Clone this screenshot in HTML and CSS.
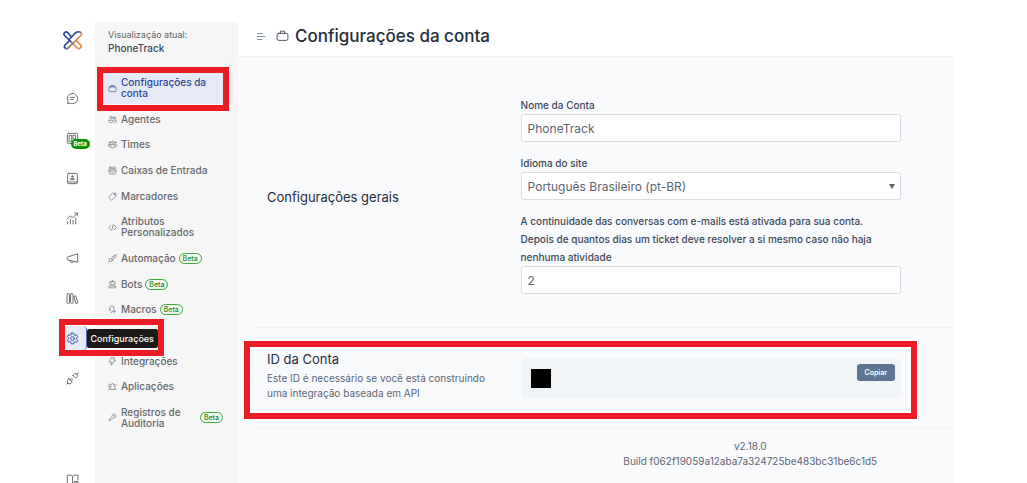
FILE: index.html
```html
<!DOCTYPE html>
<html lang="pt-BR">
<head>
    <meta charset="UTF-8">
    <meta name="viewport" content="width=device-width, initial-scale=1.0">
    <title>PhoneTrack - Configurações da conta</title>
    <link rel="stylesheet" href="styles.css">
</head>
<body>
    <div class="app">
        <nav class="rail" aria-label="Principal">
            <a href="#" class="rail-logo" aria-label="Início">
                <svg width="20" height="20" viewBox="0 0 20 20" fill="none" stroke-width="1.7" stroke-linecap="round" stroke-linejoin="round">
                    <defs>
                        <linearGradient id="logoGradient" gradientUnits="userSpaceOnUse" x1="6" y1="5" x2="16" y2="13">
                            <stop offset="0.35" stop-color="#2f4c9c"/>
                            <stop offset="0.75" stop-color="#e58a4b"/>
                        </linearGradient>
                    </defs>
                    <g stroke="url(#logoGradient)">
                        <path d="M8 6.500 4.700 2.600a2.100 2.100 0 0 0-3.100 2.900l12.600 12.300a2.200 2.200 0 0 0 3.300-3L13.500 10.800"/>
                        <path d="M6.500 9 12.800 2.700l2-.9h1.500a2.200 2.200 0 0 1 1.600 3.700L5.500 17.800a2.200 2.200 0 0 1-3.600-2.600L6.500 10.500"/>
                    </g>
                </svg>
            </a>
            <a href="#" class="rail-link" aria-label="Conversas">
                <svg class="icon" viewBox="0 0 24 24"><path d="M12 2.500a9.500 9.500 0 1 1-4.500 17.900L2.700 21.500l1.100-4.600A9.500 9.500 0 0 1 12 2.500ZM8.500 10h7M8.500 14h5"/></svg>
            </a>
            <a href="#" class="rail-link" aria-label="Kanban">
                <svg class="icon" viewBox="0 0 24 24"><rect x="2.500" y="2.500" width="19" height="19" rx="2"/><path d="M6.500 6h4v12h-4zM13.500 6h4v7h-4z"/></svg>
                <span class="rail-badge">Beta</span>
            </a>
            <a href="#" class="rail-link" aria-label="Contatos">
                <svg class="icon" viewBox="0 0 24 24"><path d="M5 2.500h14a2 2 0 0 1 2 2v15a2 2 0 0 1-2 2H5a2 2 0 0 1-2-2V4.500a2 2 0 0 1 2-2ZM3 18.500h18M9 14h6v-1.500H9Z"/><circle cx="12" cy="8.500" r="1.500"/></svg>
            </a>
            <a href="#" class="rail-link" aria-label="Relatórios">
                <svg class="icon" viewBox="0 0 24 24"><path d="M3 22v-4M8 22v-9M13 22v-7M18 22V11M2 13l6-6 4 4 9-9M16 2h5v5"/></svg>
            </a>
            <a href="#" class="rail-link" aria-label="Campanhas">
                <svg class="icon" viewBox="0 0 24 24"><path d="M21.500 4v15L3.500 14.500a2 2 0 0 1-1.500-2v-1.500A2 2 0 0 1 3.500 9ZM7 15.500c0 5 6 6 7.500 1.800"/></svg>
            </a>
            <a href="#" class="rail-link" aria-label="Central de ajuda">
                <svg class="icon" viewBox="0 0 24 24"><rect x="2" y="3" width="4.500" height="18" rx="1.500"/><rect x="8.500" y="3" width="4.500" height="18" rx="1.500"/><path d="m15 8 3-1 4 13-3 1Z"/></svg>
            </a>
            <a href="#" class="rail-link active" aria-label="Configurações">
                <svg class="icon" viewBox="0 0 24 24"><path d="M10 2h4l.7 3 2 1.100 3-.9 2 3.500L19.500 11v2l2.200 2.300-2 3.500-3-.9-2 1.100-.7 3h-4l-.7-3-2-1.100-3 .9-2-3.500L4.500 13v-2L2.300 8.700l2-3.500 3 .9 2-1.100Z"/><circle cx="12" cy="12" r="3.500"/></svg>
                <span class="tooltip">Configurações</span>
                <span class="highlight highlight-rail"></span>
            </a>
            <a href="#" class="rail-link" aria-label="Integrações">
                <svg class="icon" viewBox="0 0 24 24"><path d="M13 6.500l4.500 4.500c4-1.500 5-4.500 3-7s-6-1-7.500 2.500ZM20.500 3.500 22.500 1.500M5.500 12.500l6 6c-2 4-6 4.500-8 2s-1.500-6.500 2-8ZM3.500 20.500l-2 2M8 14.500l2.500-2.500M10 16.500l2.500-2.500"/></svg>
            </a>
            <a href="#" class="rail-link rail-docs" aria-label="Documentação">
                <svg class="icon" viewBox="0 0 24 24"><path d="M12 20H2.500V4H10l2 2v14ZM12 6l2-2h8v9M15 21v-5h7v5M18.500 16v4"/></svg>
            </a>
        </nav>

        <aside class="sidebar">
            <div class="account">
                <p class="account-label">Visualização atual:</p>
                <p class="account-name">PhoneTrack</p>
            </div>
            <ul class="menu">
                <li>
                    <a href="#" class="menu-link active">
                        <svg class="icon" viewBox="0 0 24 24"><rect x="2.500" y="7.500" width="19" height="13" rx="3"/><path d="M8 7.500V4h8v3.500"/></svg>
                        <span>Configurações da conta</span>
                    </a>
                    <span class="highlight highlight-menu"></span>
                </li>
                <li><a href="#" class="menu-link">
                    <svg class="icon" viewBox="0 0 24 24"><circle cx="8" cy="7" r="3.500"/><circle cx="17" cy="8" r="3"/><path d="M2 14h11v3c0 5-11 5-11 0ZM16 14h6v3c0 3-3 4-6 3"/></svg>
                    <span>Agentes</span></a></li>
                <li><a href="#" class="menu-link">
                    <svg class="icon" viewBox="0 0 24 24"><circle cx="12" cy="6" r="3"/><circle cx="4.500" cy="7" r="2"/><circle cx="19.500" cy="7" r="2"/><path d="M7.500 12h9v5c0 6-9 6-9 0ZM4.500 12H2v4c0 2 1 3 3 3M19.500 12H22v4c0 2-1 3-3 3"/></svg>
                    <span>Times</span></a></li>
                <li><a href="#" class="menu-link">
                    <svg class="icon" viewBox="0 0 24 24"><rect x="3" y="3" width="18" height="18" rx="3"/><path d="M3 13h5c1 4 7 4 8 0h5M7 7h10M7 10h10"/></svg>
                    <span>Caixas de Entrada</span></a></li>
                <li><a href="#" class="menu-link">
                    <svg class="icon" viewBox="0 0 24 24"><path d="M13 3h8v8L11 21a2 2 0 0 1-3 0l-5-5a2 2 0 0 1 0-3Z"/><circle cx="17" cy="7" r="1"/></svg>
                    <span>Marcadores</span></a></li>
                <li><a href="#" class="menu-link">
                    <svg class="icon" viewBox="0 0 24 24"><path d="m7 6-5 6 5 6M17 6l5 6-5 6M14 4l-4 16"/></svg>
                    <span>Atributos Personalizados</span></a></li>
                <li><a href="#" class="menu-link">
                    <svg class="icon" viewBox="0 0 24 24"><circle cx="7" cy="16" r="4.500"/><path d="m2 22 2-2M14 6l4 4c4-1 4-4 3-6s-6-2-7 2ZM21 3l2-2M11 12l3-3M13 15l3-3"/></svg>
                    <span>Automação</span><span class="badge">Beta</span></a></li>
                <li><a href="#" class="menu-link">
                    <svg class="icon" viewBox="0 0 24 24"><rect x="5" y="4" width="14" height="9" rx="2"/><path d="M12 1v3M9 8v1M15 8v1M4 16h16v5H4Z"/></svg>
                    <span>Bots</span><span class="badge">Beta</span></a></li>
                <li><a href="#" class="menu-link">
                    <svg class="icon" viewBox="0 0 24 24"><path d="M5 13V8a5 5 0 0 1 11 0v3M3 13h4M10 17h8M15 13l5 4-5 4M8 20h2"/></svg>
                    <span>Macros</span><span class="badge">Beta</span></a></li>
                <li><a href="#" class="menu-link">
                    <svg class="icon" viewBox="0 0 24 24"><path d="M4 4h16v13h-9l-5 4v-4H4Z"/></svg>
                    <span>Atalhos</span></a></li>
                <li><a href="#" class="menu-link">
                    <svg class="icon" viewBox="0 0 24 24"><path d="M9 2h8l-2 6h5L8 22l2-8H5Z"/></svg>
                    <span>Integrações</span></a></li>
                <li><a href="#" class="menu-link">
                    <svg class="icon" viewBox="0 0 24 24"><path d="M6 8h3c-1-6 7-6 6 0h4v4c-3 0-3 4 0 4v4H6v-4c3 0 3-4 0-4ZM1 6l3 2M23 6l-2 2M1 13h3M1 20l3-2M23 20l-2-2"/></svg>
                    <span>Aplicações</span></a></li>
                <li><a href="#" class="menu-link">
                    <svg class="icon" viewBox="0 0 24 24"><path d="m3 18 8-8c-1-5 3-8 7-7l-3 3 3 3 3-3c1 5-2 8-7 7l-8 8c-2 1-4-1-3-3Z"/></svg>
                    <span>Registros de Auditoria</span><span class="badge badge-end">Beta</span></a></li>
            </ul>
        </aside>

        <main class="main">
            <header class="header">
                <button type="button" class="menu-toggle" aria-label="Alternar menu">
                    <svg width="10" height="8" viewBox="0 0 10 8"><path d="M1 1.500h6M1 4.500h8M1 7.500h5"/></svg>
                </button>
                <svg class="icon header-icon" viewBox="0 0 24 24"><rect x="2" y="8" width="20" height="13" rx="3"/><path d="M8 8V4h8v4"/></svg>
                <h1 class="title">Configurações da conta</h1>
            </header>

            <div class="content">
                <section class="section section-general">
                    <h2 class="section-title">Configurações gerais</h2>
                    <form class="form">
                        <div class="field">
                            <label for="name">Nome da Conta</label>
                            <input type="text" id="name" class="control" value="PhoneTrack">
                        </div>
                        <div class="field">
                            <label for="locale">Idioma do site</label>
                            <div class="select">
                                <select id="locale" class="control">
                                    <option>Português Brasileiro (pt-BR)</option>
                                </select>
                                <svg class="select-arrow" width="6" height="5" viewBox="0 0 6 5"><path d="M0 0h6L3 5Z"/></svg>
                            </div>
                        </div>
                        <div class="field">
                            <label for="days">A continuidade das conversas com e-mails está ativada para sua conta.<br>Depois de quantos dias um ticket deve resolver a si mesmo caso não haja nenhuma atividade</label>
                            <input type="text" inputmode="numeric" id="days" class="control" value="2">
                        </div>
                    </form>
                </section>

                <section class="section section-id">
                    <div class="section-info">
                        <h2 class="section-title">ID da Conta</h2>
                        <p class="section-text">Este ID é necessário se você está construindo uma integração baseada em API</p>
                    </div>
                    <div class="code">
                        <span class="code-value"></span>
                        <button type="button" class="copy-btn">Copiar</button>
                    </div>
                    <span class="highlight highlight-id"></span>
                </section>

                <footer class="version">
                    <p>v2.18.0</p>
                    <p>Build f062f19059a12aba7a324725be483bc31be6c1d5</p>
                </footer>
            </div>
        </main>
    </div>
</body>
</html>
```
FILE: styles.css
```css
* {
    margin: 0;
    padding: 0;
    box-sizing: border-box;
}

body {
    font-family: Inter, 'Liberation Sans', sans-serif;
    font-size: 10px;
    color: #3c4858;
    background: #fff;
    padding: 22px 74px 0 50px;
}

a {
    color: inherit;
    text-decoration: none;
}

.app {
    display: flex;
    min-height: calc(100vh - 22px);
}

.icon {
    width: 13px;
    height: 13px;
    flex: none;
    fill: none;
    stroke: currentColor;
    stroke-width: 1.7;
    stroke-linecap: round;
    stroke-linejoin: round;
}

/* Marcações em vermelho */
.highlight {
    position: absolute;
    border: 6px solid #ec1c24;
    pointer-events: none;
    z-index: 2;
}

/* Barra principal */
.rail {
    width: 45px;
    flex: none;
    display: flex;
    flex-direction: column;
    align-items: center;
    gap: 16px;
    color: #5f6368;
}

.rail-logo {
    height: 36px;
    margin-bottom: 12px;
    display: flex;
    align-items: center;
}

.rail-link {
    position: relative;
    width: 28px;
    height: 24px;
    flex: none;
    display: flex;
    align-items: center;
    justify-content: center;
}

.rail-link.active {
    color: #2f4fa5;
    background: #e5eaf6;
    border-right: 1px solid #5a77c4;
    border-radius: 4px;
}

.rail-docs {
    margin-top: auto;
    margin-bottom: -8px;
}

.rail-badge {
    position: absolute;
    left: 12px;
    top: 13px;
    padding: 0 3px;
    border-radius: 6px;
    background: #0a930a;
    color: #fff;
    font-size: 6px;
    font-weight: 700;
    line-height: 10px;
}

.tooltip {
    position: absolute;
    left: 28px;
    top: 3px;
    padding: 0 4px;
    border-radius: 2px;
    background: #1b1a18;
    color: #fff;
    font-size: 9px;
    font-weight: 500;
    line-height: 19px;
    z-index: 1;
}

.highlight-rail {
    left: 0;
    top: -7px;
    width: 105px;
    height: 37px;
}

/* Menu lateral */
.sidebar {
    width: 143px;
    flex: none;
    background: #f6f6f6;
    padding: 0 5px 0 3px;
}

.account {
    height: 40px;
    padding: 7px 9px;
    border: 1px solid #f1f1f1;
    border-top: 0;
    border-radius: 4px;
}

.account-label {
    font-size: 9px;
    line-height: 12px;
    color: #5f6368;
}

.account-name {
    font-size: 10px;
    font-weight: 500;
    line-height: 14px;
    color: #3c4858;
}

.menu {
    list-style: none;
    margin-top: 10px;
    min-height: 362px;
    display: flex;
    flex-direction: column;
    justify-content: space-between;
}

.menu li {
    position: relative;
}

.menu-link {
    display: flex;
    align-items: center;
    gap: 4px;
    padding: 5px 10px;
    border-radius: 4px;
    color: #66696d;
    font-weight: 500;
    line-height: 11px;
}

.menu-link .icon {
    width: 9px;
    height: 9px;
}

.menu-link.active {
    color: #2f4695;
    background: #e5eaf6;
}

.highlight-menu {
    left: -1px;
    top: -5px;
    width: 132px;
    height: 44px;
}

.badge {
    flex: none;
    margin-left: -1px;
    padding: 0 3px;
    border: 1px solid #3aa83a;
    border-radius: 6px;
    color: #159015;
    font-size: 7px;
    line-height: 9px;
}

.badge-end {
    margin-left: auto;
}

/* Conteúdo */
.main {
    flex: 1;
    min-width: 0;
    display: flex;
    flex-direction: column;
    background: #f9fafc;
}

.header {
    height: 35px;
    display: flex;
    align-items: center;
    padding: 0 18px 7px;
    background: #fff;
    border-bottom: 1px solid #f0f2f4;
}

.menu-toggle {
    display: flex;
    border: 0;
    background: none;
    cursor: pointer;
}

.menu-toggle svg {
    fill: none;
    stroke: #8294a8;
}

.header-icon {
    margin: 0 6px 0 10px;
}

.title {
    font-size: 17px;
    font-weight: 500;
    color: #1f2d3d;
}

.content {
    padding-left: 16px;
}

.section {
    position: relative;
    display: grid;
    grid-template-columns: 4fr 6fr;
    padding: 0 52px 0 13px;
    border-bottom: 1px solid #eff2f5;
}

.section-general {
    align-items: center;
    padding-top: 39px;
    padding-bottom: 29px;
}

.section-id {
    padding-top: 23px;
    padding-bottom: 27px;
}

.section-title {
    font-size: 13px;
    font-weight: 400;
    line-height: 16px;
    color: #1f2d3d;
}

.section-info {
    padding-right: 32px;
}

.section-text {
    margin-top: 4px;
    line-height: 15px;
    color: #5c6675;
}

.form {
    display: flex;
    flex-direction: column;
    gap: 12px;
    padding-bottom: 4px;
}

.field label {
    display: block;
    font-weight: 500;
    line-height: 18px;
}

.control {
    display: block;
    width: 100%;
    height: 28px;
    padding: 0 6px;
    border: 1px solid #d8dee6;
    border-radius: 3px;
    background: #fff;
    color: #5c6370;
    font-family: inherit;
    font-size: 12px;
    appearance: none;
}

.select {
    position: relative;
}

.select-arrow {
    position: absolute;
    right: 6px;
    top: 12px;
    fill: #5f6368;
    pointer-events: none;
}

.code {
    display: flex;
    align-items: flex-start;
    justify-content: space-between;
    height: 41px;
    margin-top: 7px;
    padding: 6px 6px 0 10px;
    border-radius: 6px;
    background: #f1f4f7;
}

.code-value {
    width: 20px;
    height: 19px;
    margin-top: 5px;
    background: #000;
}

.copy-btn {
    height: 17px;
    padding: 0 8px;
    border: 0;
    border-radius: 3px;
    background: #5d7592;
    color: #fff;
    font-family: inherit;
    font-size: 7px;
    font-weight: 600;
    cursor: pointer;
}

.highlight-id {
    left: -10px;
    right: 36px;
    top: 13px;
    height: 78px;
}

.version {
    margin-left: 42%;
    padding-top: 10px;
    text-align: center;
    line-height: 15px;
    color: #5c6675;
}
```
